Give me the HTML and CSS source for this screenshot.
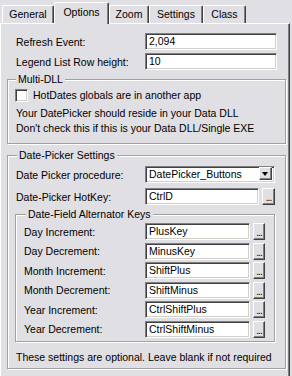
FILE: index.html
```html
<!DOCTYPE html>
<html lang="en">
<head>
    <meta charset="UTF-8">
    <title>Options</title>
    <link rel="stylesheet" href="styles.css">
</head>
<body>

<div class="dialog">
    <div class="tabs">
        <div class="tab tab-general">General</div>
        <div class="tab tab-options active">Options</div>
        <div class="tab tab-zoom">Zoom</div>
        <div class="tab tab-settings">Settings</div>
        <div class="tab tab-class">Class</div>
    </div>

    <div class="panel">
        <div class="row">
            <label class="label">Refresh Event:</label>
            <div class="input wide">2,094</div>
        </div>
        <div class="row">
            <label class="label">Legend List Row height:</label>
            <div class="input wide">10</div>
        </div>

        <div class="group multi">
            <div class="group-title">Multi-DLL</div>
            <div class="check-row">
                <span class="checkbox"></span>
                <span>HotDates globals are in another app</span>
            </div>
            <p class="note first">Your DatePicker should reside in your Data DLL</p>
            <p class="note">Don't check this if this is your Data DLL/Single EXE</p>
        </div>

        <div class="group picker">
            <div class="group-title">Date-Picker Settings</div>
            <div class="row">
                <label class="label">Date Picker procedure:</label>
                <div class="input combo">
                    <span>DatePicker_Buttons</span>
                    <span class="drop"></span>
                </div>
            </div>
            <div class="row hotkey">
                <label class="label">Date-Picker HotKey:</label>
                <div class="input key">CtrlD</div>
                <button class="dots">...</button>
            </div>

            <div class="group keys">
                <div class="group-title">Date-Field Alternator Keys</div>
                <div class="key-list">
                    <div class="row">
                        <label class="label">Day Increment:</label>
                        <div class="input key">PlusKey</div>
                        <button class="dots">...</button>
                    </div>
                    <div class="row">
                        <label class="label">Day Decrement:</label>
                        <div class="input key">MinusKey</div>
                        <button class="dots">...</button>
                    </div>
                    <div class="row">
                        <label class="label">Month Increment:</label>
                        <div class="input key">ShiftPlus</div>
                        <button class="dots">...</button>
                    </div>
                    <div class="row">
                        <label class="label">Month Decrement:</label>
                        <div class="input key">ShiftMinus</div>
                        <button class="dots">...</button>
                    </div>
                    <div class="row">
                        <label class="label">Year Increment:</label>
                        <div class="input key">CtrlShiftPlus</div>
                        <button class="dots">...</button>
                    </div>
                    <div class="row">
                        <label class="label">Year Decrement:</label>
                        <div class="input key">CtrlShiftMinus</div>
                        <button class="dots">...</button>
                    </div>
                </div>
            </div>

            <p class="footnote">These settings are optional. Leave blank if not required</p>
        </div>
    </div>
</div>

</body>
</html>
```

FILE: styles.css
```css
/* Classic Windows property sheet */
body {
    margin: 0;
    background: #e0dfe3;
    font-family: 'Liberation Sans', Arial, sans-serif;
    font-size: 10.5px;
    color: #000;
}

.dialog {
    width: 292px;
    height: 376px;
    overflow: hidden;
}

/* Tabs */
.tabs {
    display: flex;
    align-items: flex-end;
    height: 23px;
    padding-left: 2px;
}

.tab {
    box-sizing: border-box;
    height: 18px;
    line-height: 16px;
    text-align: center;
    border-top: 1px solid #fff;
    border-left: 1px solid #fff;
    border-right: 1px solid #404040;
    box-shadow: inset -1px 0 0 #808080;
    border-radius: 2px 2px 0 0;
    background: #e0dfe3;
}

.tab-general { width: 52px; }
.tab-options { width: 55px; }
.tab-zoom { width: 40px; }
.tab-settings { width: 54px; }
.tab-class { width: 43px; }

.tab.active {
    position: relative;
    z-index: 1;
    height: 22px;
    line-height: 19px;
    margin-bottom: -1px;
}

/* Panel */
.panel {
    box-sizing: border-box;
    width: 290px;
    height: 360px;
    border-top: 1px solid #fff;
    border-left: 1px solid #fff;
    border-right: 1px solid #404040;
    border-bottom: 1px solid #404040;
    box-shadow: inset -1px -1px 0 #808080;
    padding: 9px 0 0 15px;
}

.row {
    display: flex;
    align-items: center;
    height: 17px;
    margin-bottom: 3px;
}

.label {
    width: 129px;
    flex: none;
}

.input {
    box-sizing: border-box;
    height: 17px;
    line-height: 13px;
    padding: 1px 3px;
    background: #fff;
    border-top: 1px solid #808080;
    border-left: 1px solid #808080;
    border-bottom: 1px solid #fff;
    border-right: 1px solid #fff;
    box-shadow: inset 1px 1px 0 #404040, inset -1px -1px 0 #d4d0c8;
    white-space: nowrap;
}

.input.wide { width: 132px; }
.input.key { width: 114px; }

.input.combo {
    width: 130px;
    display: flex;
    justify-content: space-between;
    padding-right: 2px;
}

.drop {
    box-sizing: border-box;
    width: 13px;
    height: 13px;
    margin-top: -1px;
    background: #e0dfe3;
    border-top: 1px solid #fff;
    border-left: 1px solid #fff;
    border-right: 1px solid #404040;
    border-bottom: 1px solid #404040;
    box-shadow: inset -1px -1px 0 #808080;
    display: flex;
    align-items: center;
    justify-content: center;
}

.drop::after {
    content: "";
    border-left: 3px solid transparent;
    border-right: 3px solid transparent;
    border-top: 4px solid #000;
    margin-left: -1px;
}

.dots {
    box-sizing: border-box;
    width: 13px;
    height: 17px;
    margin-left: 3px;
    padding: 0;
    font: inherit;
    font-size: 10px;
    line-height: 18px;
    background: #e0dfe3;
    border-top: 1px solid #fff;
    border-left: 1px solid #fff;
    border-right: 1px solid #404040;
    border-bottom: 1px solid #404040;
    box-shadow: inset -1px -1px 0 #808080;
    letter-spacing: -1px;
}

/* Group boxes */
.group {
    box-sizing: border-box;
    border: 1px solid #a0a0a0;
    box-shadow: inset 1px 1px 0 #fff, 1px 1px 0 #fff;
}

.group-title {
    display: table;
    margin-top: -7px;
    padding: 0 2px;
    line-height: 13px;
    background: #e0dfe3;
}

.multi {
    width: 279px;
    margin: 9px 0 0 -9px;
    padding: 0 0 7px 7px;
}

.multi .group-title {
    margin-left: 1px;
}

.check-row {
    display: flex;
    align-items: center;
    gap: 5px;
    height: 14px;
    margin-top: 2px;
}

.checkbox {
    box-sizing: border-box;
    width: 13px;
    height: 13px;
    background: #fff;
    border-top: 1px solid #808080;
    border-left: 1px solid #808080;
    border-bottom: 1px solid #fff;
    border-right: 1px solid #fff;
    box-shadow: inset 1px 1px 0 #404040, inset -1px -1px 0 #d4d0c8;
}

.note {
    margin: 0;
    padding-left: 1px;
    line-height: 15px;
}

.note.first {
    margin-top: 4px;
}

.picker {
    width: 279px;
    margin: 11px 0 0 -9px;
    padding: 0 0 3px 8px;
}

.picker .group-title {
    margin-left: 1px;
    margin-bottom: 4px;
}

.hotkey {
    margin: 5px 0 9px;
}

.keys {
    width: 260px;
    margin-left: -1px;
    padding: 0 0 3px 8px;
}

.keys .group-title {
    margin-left: 2px;
    margin-bottom: 2px;
}

.keys .label {
    width: 121px;
}

.keys .input.key {
    width: 105px;
}

.keys .dots {
    width: 12px;
}

.key-list {
    display: flex;
    flex-direction: column;
    gap: 2.6px;
}

.key-list .row {
    margin: 0;
}

.footnote {
    margin: 8px 0 0;
    line-height: 15px;
}
```
